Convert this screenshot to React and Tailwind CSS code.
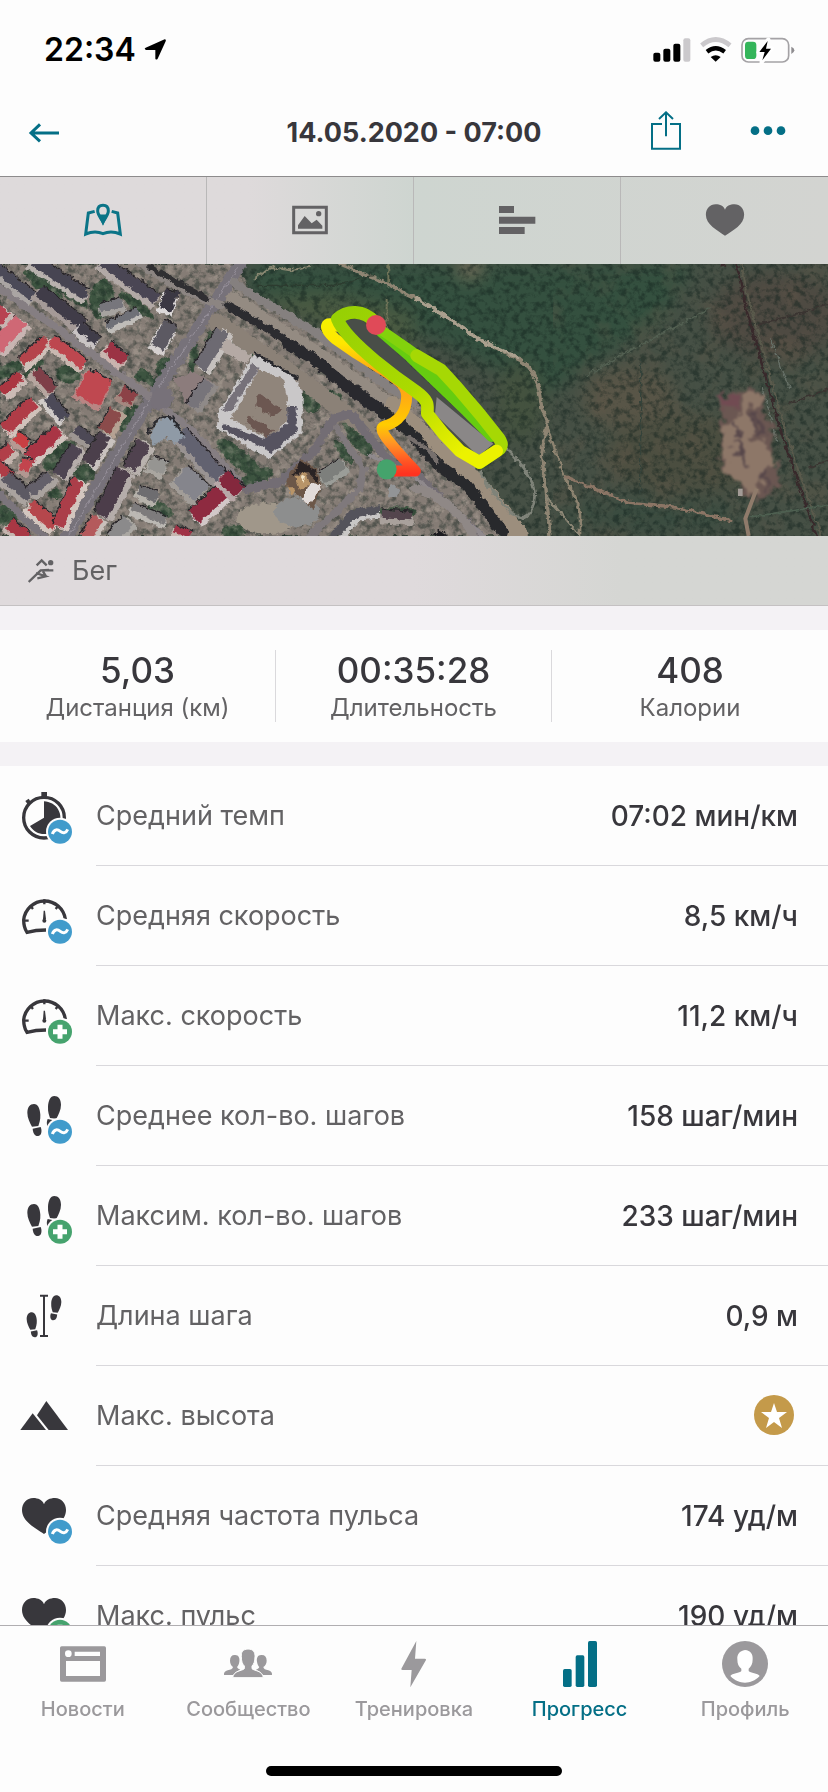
import React from 'react'

const stats = [
  { value: '5,03', label: 'Дистанция (км)' },
  { value: '00:35:28', label: 'Длительность' },
  { value: '408', label: 'Калории' },
]

const details = [
  { icon: 'pace', badge: 'avg', label: 'Средний темп', value: '07:02 мин/км' },
  { icon: 'gauge', badge: 'avg', label: 'Средняя скорость', value: '8,5 км/ч' },
  { icon: 'gauge', badge: 'max', label: 'Макс. скорость', value: '11,2 км/ч' },
  { icon: 'steps', badge: 'avg', label: 'Среднее кол-во. шагов', value: '158 шаг/мин' },
  { icon: 'steps', badge: 'max', label: 'Максим. кол-во. шагов', value: '233 шаг/мин' },
  { icon: 'stride', label: 'Длина шага', value: '0,9 м' },
  { icon: 'mountain', label: 'Макс. высота', premium: true },
  { icon: 'heart', badge: 'avg', label: 'Средняя частота пульса', value: '174 уд/м' },
  { icon: 'heart', badge: 'max', label: 'Макс. пульс', value: '190 уд/м' },
]

// x, y, width, height, angle, roof, wall
const buildings = [
  [40, 85, 150, 30, 38, '#4b4a58', '#aaa5a3'],
  [175, 70, 190, 34, 33, '#474552', '#b9b2ae'],
  [180, 162, 170, 36, 37, '#403c48', '#a59a97'],
  [262, 240, 70, 30, 38, '#403d49', '#c9c4c4'],
  [385, 80, 200, 34, 35, '#4a4654', '#b2a9a6'],
  [505, 140, 40, 60, 20, '#3b3843', '#dcd8d8'],
  [490, 245, 44, 84, 28, '#5c5962', '#d5d0cf'],
  [335, 155, 70, 26, -15, '#77767c', '#a7a3a0'],
  [370, 195, 105, 22, -25, '#6f7077', '#c0bdb9'],
  [345, 300, 66, 38, 38, '#9b3344', '#c9b4ae'],
  [30, 240, 110, 46, -48, '#cf6875', '#c8b5b2'],
  [5, 180, 40, 44, -48, '#b84352', '#c8b5b2'],
  [105, 292, 100, 32, -42, '#b5444b', '#cfc0b8'],
  [200, 295, 125, 32, 38, '#bd474f', '#c9b8b0'],
  [38, 390, 72, 32, -42, '#ab3641', '#cbbbb5'],
  [128, 378, 80, 32, 48, '#7e3f48', '#b6a69f'],
  [278, 402, 80, 84, 28, '#bf4850', '#b98583'],
  [165, 460, 84, 30, 52, '#4c4a58', '#d0cbc8'],
  [62, 485, 120, 38, -43, '#b03c47', '#d1c2bb'],
  [62, 560, 44, 30, 35, '#c93f43', '#b69892'],
  [135, 570, 122, 40, -42, '#a93545', '#d1c4be'],
  [248, 545, 66, 28, 35, '#4d4956', '#9d9692'],
  [295, 585, 100, 38, -58, '#4b3f4b', '#c9c2bf'],
  [208, 620, 100, 38, -58, '#4e4552', '#b5adaa'],
  [380, 425, 46, 36, 30, '#8c4247', '#a4877f'],
  [335, 500, 70, 40, -62, '#8b4b4b', '#b5a293'],
  [15, 600, 60, 34, -40, '#b13f49', '#c5b5ae'],
  [75, 635, 30, 36, 20, '#c2444d', '#b29791'],
  [10, 655, 60, 32, 40, '#ae3c46', '#c2b3ad'],
  [50, 700, 100, 34, 40, '#5c5963', '#aaa39f'],
  [125, 690, 80, 32, -38, '#64606a', '#aaa39f'],
  [125, 785, 100, 36, 40, '#b5474c', '#d3c6bf'],
  [210, 745, 150, 36, -66, '#ab3e49', '#d3c6bf'],
  [50, 830, 70, 34, 38, '#a83744', '#c4b6af'],
  [280, 820, 70, 36, -60, '#b45a5c', '#c9c0bb'],
  [415, 605, 90, 42, -60, '#50424f', '#b9b2ae'],
  [343, 715, 150, 46, -64, '#4c3d4a', '#b5adaa'],
  [365, 825, 70, 40, -50, '#8b8a8b', '#aaa7a2'],
  [600, 605, 185, 44, 48, '#626270', '#999392'],
  [645, 735, 160, 48, -42, '#8e2a40', '#d2c8c8'],
  [690, 690, 70, 44, 44, '#84283d', '#b8a8a8'],
  [570, 690, 90, 66, 42, '#85858c', '#a29d98'],
  [445, 780, 110, 24, 22, '#7d7b7c', '#bbb8b3'],
  [440, 720, 60, 30, 25, '#6e6d70', '#b6b2ab'],
  [545, 835, 50, 24, 25, '#a03246', '#c5b5ae'],
  [470, 635, 50, 40, 25, '#969592', '#aaa6a0'],
  [640, 285, 130, 42, -58, '#6d6a72', '#c6c1be'],
  [605, 420, 90, 36, -55, '#77747a', '#8f8a88'],
  [1190, 785, 90, 26, 4, '#54454d', '#a9a19c'],
  [1000, 650, 80, 36, -35, '#7d7f7c', '#9b9d98'],
]

const trees = [
  [130, 90, 70, 20, 38], [215, 120, 60, 14, 35], [305, 130, 36, 60, 10], [410, 150, 60, 16, 38],
  [205, 355, 36, 30, 0], [428, 360, 24, 20, 0], [490, 335, 20, 34, 25], [458, 378, 18, 14, 0],
  [20, 345, 50, 20, -20], [390, 490, 30, 46, 35], [180, 600, 60, 34, -40], [252, 655, 34, 28, 0],
  [720, 610, 90, 26, 40], [770, 665, 50, 22, -20], [935, 435, 30, 36, 0], [1000, 425, 30, 18, 20],
  [1075, 550, 24, 66, -36], [1030, 590, 14, 44, -35], [700, 830, 36, 22, 0], [480, 765, 40, 22, 20],
  [600, 740, 24, 30, 20], [20, 780, 36, 30, 0], [715, 265, 60, 18, 38], [580, 310, 12, 44, 10],
  [165, 715, 20, 16, 0], [640, 240, 26, 18, -40], [100, 340, 40, 12, -40], [1190, 770, 60, 14, 0],
]

const FOOT = 'M102 102C114 102 120 116 121 134C122 150 117 160 115 168L96 170C90 158 82 144 82 128C82 112 90 102 102 102Z'
const HEEL = 'M98 176L122 171C126 180 126 196 115 198C103 199 99 188 98 176Z'
const HEART = 'M132 103C128 90 114 84 100 84C80 84 66 99 66 120C66 154 106 174 132 192C160 174 198 154 198 120C198 99 184 84 165 84C150 84 136 90 132 103Z'

const Satellite = () => (
  <svg className="block w-full h-[272px]" viewBox="0 26 2484 816" preserveAspectRatio="xMidYMid slice" role="img" aria-label="Карта маршрута">
    <defs>
      <filter id="grain" x="0" y="0" width="100%" height="100%" colorInterpolationFilters="sRGB">
        <feTurbulence type="fractalNoise" baseFrequency="0.05" numOctaves="4" seed="7" />
        <feColorMatrix values="0 0 0 0 0.08  0 0 0 0 0.14  0 0 0 0 0.12  3.4 0 0 0 -1.5" />
      </filter>
      <filter id="earth" x="0" y="0" width="100%" height="100%" colorInterpolationFilters="sRGB">
        <feTurbulence type="fractalNoise" baseFrequency="0.009" numOctaves="5" seed="12" />
        <feColorMatrix values="0 0 0 0 0.42  0 0 0 0 0.36  0 0 0 0 0.3  0 4 0 0 -1.9" />
      </filter>
      <filter id="town" x="0" y="0" width="100%" height="100%" colorInterpolationFilters="sRGB">
        <feTurbulence type="fractalNoise" baseFrequency="0.04" numOctaves="4" seed="21" />
        <feColorMatrix values="0 0 0 0 0.8  0 0 0 0 0.75  0 0 0 0 0.7  0 3.4 0 0 -1.6" />
      </filter>
      <filter id="rough" x="0" y="0" width="100%" height="100%" colorInterpolationFilters="sRGB">
        <feTurbulence type="fractalNoise" baseFrequency="0.06" numOctaves="3" seed="3" result="noise" />
        <feDisplacementMap in="SourceGraphic" in2="noise" scale="18" xChannelSelector="R" yChannelSelector="G" />
      </filter>
      <filter id="crumble" x="-10%" y="-10%" width="120%" height="120%" colorInterpolationFilters="sRGB">
        <feTurbulence type="fractalNoise" baseFrequency="0.03" numOctaves="4" seed="9" result="noise" />
        <feDisplacementMap in="SourceGraphic" in2="noise" scale="70" xChannelSelector="R" yChannelSelector="G" />
        <feGaussianBlur stdDeviation="3" />
      </filter>
      <filter id="soft" x="-20%" y="-20%" width="140%" height="140%" colorInterpolationFilters="sRGB">
        <feGaussianBlur stdDeviation="26" />
      </filter>
      <linearGradient id="warm" gradientUnits="userSpaceOnUse" x1="0" y1="90" x2="0" y2="550">
        <stop offset="0" stopColor="#f6f200" />
        <stop offset="0.15" stopColor="#ffe600" />
        <stop offset="0.36" stopColor="#ff9d18" />
        <stop offset="0.5" stopColor="#ffac12" />
        <stop offset="0.68" stopColor="#ffcc00" />
        <stop offset="0.8" stopColor="#ff9524" />
        <stop offset="0.92" stopColor="#ff5524" />
        <stop offset="1" stopColor="#ff3320" />
      </linearGradient>
      <linearGradient id="lime" gradientUnits="userSpaceOnUse" x1="90" y1="70" x2="450" y2="500">
        <stop offset="0" stopColor="#97d004" />
        <stop offset="0.55" stopColor="#abda00" />
        <stop offset="0.8" stopColor="#d2e600" />
        <stop offset="1" stopColor="#ecf200" />
      </linearGradient>
      <clipPath id="townClip">
        <path d="M0 26H700L760 120L1240 430L1580 842H0Z" />
      </clipPath>
    </defs>

    {/* Ground */}
    <rect y="26" width="2484" height="816" fill="#465045" />
    <g filter="url(#soft)">
      <path d="M760 26H2080L1980 200L1760 330L1640 420L1300 250L740 110Z" fill="#34503f" />
      <ellipse cx="1890" cy="430" rx="140" ry="100" fill="#585547" />
      <ellipse cx="2330" cy="180" rx="200" ry="130" fill="#4e4a42" />
      <ellipse cx="2060" cy="600" rx="240" ry="120" fill="#4b4e40" />
      <ellipse cx="1560" cy="440" rx="70" ry="120" fill="#44523f" />
      <ellipse cx="1410" cy="45" rx="40" ry="20" fill="#887862" />
      <ellipse cx="1950" cy="780" rx="260" ry="50" fill="#3a4c40" />
      <path d="M760 130L1000 110L1240 170V300L1000 220Z" fill="#4a5a42" />
    </g>
    <rect x="1660" y="26" width="824" height="816" filter="url(#earth)" opacity="0.25" />
    <rect y="26" width="2484" height="816" filter="url(#grain)" opacity="0.5" />

    {/* Town */}
    <g filter="url(#rough)">
      <path d="M0 26H710L760 120L960 240L1230 420L1400 600L1570 842H0Z" fill="#857c75" />
      {trees.map(([x, y, rx, ry, a], i) => (
        <ellipse key={i} cx={x} cy={y} rx={rx} ry={ry} transform={`rotate(${a} ${x} ${y})`} fill="#3d5440" />
      ))}
    </g>
    <g clipPath="url(#townClip)">
      <rect y="26" width="1600" height="816" filter="url(#town)" opacity="0.3" />
      <rect y="26" width="1600" height="816" filter="url(#grain)" opacity="0.45" />
    </g>

    <g filter="url(#rough)">
      {/* Roads */}
      <g fill="none" strokeLinecap="round" strokeLinejoin="round">
        <path d="M720 26L600 210L440 450L200 842" stroke="#77727a" strokeWidth="38" />
        <path d="M712 40L590 222L434 460L205 842" stroke="#96909a" strokeWidth="3" />
        <path d="M0 100L160 210L430 410L560 510L720 680" stroke="#857e82" strokeWidth="22" />
        <path d="M0 720L130 842" stroke="#7b757c" strokeWidth="22" />
        <path d="M420 26L560 110L660 150" stroke="#8c8582" strokeWidth="22" />
        <path d="M650 200L800 300L980 430L1100 520" stroke="#8b8177" strokeWidth="50" />
        <path d="M700 130L960 300L1160 440" stroke="#948b82" strokeWidth="40" />
        <path d="M700 80L760 120L960 240L1130 370L1240 440" stroke="#85807f" strokeWidth="26" />
        <path d="M740 700L840 680L940 590L1000 490L1050 475L1120 560L1170 620L1250 660L1440 842" stroke="#736d74" strokeWidth="26" />
        <path d="M1010 520L1090 640L1080 700L930 842" stroke="#7f797c" strokeWidth="22" />
        <path d="M1110 600L1240 660L1450 842" stroke="#8f898c" strokeWidth="12" />
        <path d="M450 36L620 130" stroke="#302f32" strokeWidth="16" />
        <path d="M1180 450L1310 580L1400 650L1480 740L1560 842" stroke="#9c8e7d" strokeWidth="54" />
        <path d="M680 150L820 230L960 330L1080 410L1170 480" stroke="#2c2c30" strokeWidth="24" />
        <path d="M860 265L940 310L1060 410L1150 470" stroke="#29292e" strokeWidth="34" />
        <path d="M1150 470L1220 520L1310 625L1400 690L1510 830" stroke="#28292c" strokeWidth="34" />
        <path d="M1225 545L1295 590L1310 620" stroke="#77706d" strokeWidth="12" />
        <path d="M1242 700C1300 700 1400 790 1420 842" stroke="#8f8886" strokeWidth="26" />
      </g>
      <circle cx="485" cy="430" r="34" fill="#777179" />
      <ellipse cx="800" cy="790" rx="90" ry="46" fill="#a0978a" />
      <path d="M520 370L580 350L640 380L570 460Z" fill="#8c7c7c" />

      {/* Buildings */}
      {buildings.map(([x, y, w, h, a, roof, wall], i) => (
        <g key={i} transform={`translate(${x} ${y}) rotate(${a})`}>
          <rect x={-w / 2 - 4} y={-h / 2 + 9} width={w + 8} height={h} fill={wall} />
          <rect x={-w / 2} y={-h / 2 - 6} width={w} height={h} fill={roof} />
          <path d={`M${-w / 2} ${-h / 2 - 8}H${w / 2}`} stroke="#272429" strokeWidth="4" />
        </g>
      ))}
      <path d="M450 545C458 510 480 485 510 488C535 500 550 525 552 545L525 570L495 545L462 568Z" fill="#8f9aa6" />
      <path d="M446 535C458 495 485 480 515 486L552 540" fill="none" stroke="#2b2b30" strokeWidth="7" />
      <path d="M680 250L755 300L735 330L660 280Z" fill="#b4a9a4" />

      {/* Courtyard block */}
      <path d="M762 296L885 365L908 410V530L808 610L650 520L655 470Z" fill="#c9c7c8" />
      <path d="M760 292L895 370" stroke="#28282d" strokeWidth="8" />
      <path d="M776 340L850 372L866 455L860 500L800 550L695 490Z" fill="#90857b" />
      <path d="M755 325L780 335L690 470L665 465Z" fill="#77727a" />
      <path d="M668 505L790 550L862 505V455H890V530L815 590L665 520Z" fill="#565360" />
      <path d="M780 415L845 465L820 485L765 450ZM745 480L820 525L800 545L740 505Z" fill="#6c5751" />

      {/* Church */}
      <ellipse cx="890" cy="770" rx="68" ry="44" fill="#8d8e8e" />
      <path d="M872 650L905 610L950 640L965 690L940 760L900 730L858 690Z" fill="#6c5748" />
      <path d="M930 685L965 690L930 745L902 735Z" fill="#e2dcda" />
      <path d="M900 615L948 645L955 685L920 650L880 660Z" fill="#2a2324" />
      <path d="M885 665L915 650L930 690L900 705ZM862 690L885 700L875 720Z" fill="#b89468" />
      <path d="M900 660L915 665L910 680Z" fill="#f1e2c4" />

      <path d="M1000 842L1060 770L1140 752V790L1080 795L1040 842Z" fill="#c9c7c6" />
      <path d="M985 842L1050 765L1140 750V772L1070 785L1020 842Z" fill="#54535b" />
      <circle cx="1180" cy="708" r="17" fill="#929496" />
      <path d="M1290 842L1320 826L1350 842Z" fill="#1c1c20" />

      {/* Country tracks */}
      <g fill="none" strokeLinecap="round" strokeLinejoin="round">
        <path d="M1020 26L1150 80L1250 130L1370 205L1440 255L1550 310Q1600 330 1616 400L1626 460L1642 500L1624 600L1638 700L1650 842" stroke="#8f8573" strokeWidth="10" />
        <path d="M1250 130L1370 205L1440 255L1550 305" stroke="#aaa08e" strokeWidth="10" />
        <path d="M1642 520L1690 650L1740 760L1740 842" stroke="#8d8370" strokeWidth="8" />
        <path d="M1700 665L1880 740L2020 755L2190 795" stroke="#8b7565" strokeWidth="10" />
        <path d="M1640 725L1740 840" stroke="#8d8776" strokeWidth="7" />
        <path d="M1520 580Q1604 660 1604 720Q1600 790 1560 785T1440 650" stroke="#7f8379" strokeWidth="8" />
        <path d="M760 75L810 35L870 45L930 35" stroke="#898771" strokeWidth="6" />
        <path d="M1165 26V80M1160 130V220" stroke="#6f7358" strokeWidth="6" />
        <path d="M770 90H1000L1120 60" stroke="#2c3b2f" strokeWidth="4" />
        <path d="M1760 360L1900 280L2130 160" stroke="#536052" strokeWidth="4" />
        <path d="M1922 310V720" stroke="#34423a" strokeWidth="4" />
        <path d="M2165 26L2175 34M2210 26L2238 160L2290 340L2340 520L2400 700L2450 842" stroke="#38292b" strokeWidth="7" />
        <path d="M2224 26L2252 160L2304 340L2354 520L2414 700L2464 842" stroke="#5a5a4c" strokeWidth="6" />
        <path d="M2310 250L2370 400M2290 400L2330 560" stroke="#667067" strokeWidth="4" />
        <path d="M2280 205L2400 175L2484 145M2370 445L2484 400M2430 635L2484 615" stroke="#3a3431" strokeWidth="5" />
        <path d="M2250 785L2484 750" stroke="#4e6051" strokeWidth="5" />
      </g>
    </g>

    {/* Quarry */}
    <g filter="url(#crumble)">
      <path d="M2140 415L2190 420L2285 398L2295 480L2330 530L2325 570L2300 600L2345 640L2330 700L2270 735L2225 700L2170 640L2160 560L2165 500Z" fill="#6b5752" />
      <path d="M2140 415L2210 425L2200 455L2170 470Z" fill="#714b52" />
      <path d="M2225 425L2285 400V450L2240 470L2262 540L2300 570L2330 620L2290 640L2270 720L2190 670L2165 590L2170 520L2215 480Z" fill="#8d7768" />
      <path d="M2200 500L2220 540M2250 470L2260 530M2195 600L2230 590M2270 480L2290 540M2290 640L2300 700M2210 560L2240 640" stroke="#57474a" strokeWidth="14" />
    </g>
    <path d="M2270 700L2236 790L2246 842" fill="none" stroke="#8f7b6b" strokeWidth="12" />
    <rect x="2214" y="700" width="14" height="22" fill="#a39b96" />

    {/* Route */}
    <g transform="translate(930 105)">
      <path d="M100 90L150 85L550 460L500 500L340 350Z" fill="#494e48" />
      <path d="M380 320L550 460L505 498L375 372Z" fill="#8a8787" />
      <path d="M60 110L220 225L160 215Z" fill="#4c4b4b" />
      <g fill="none" strokeLinecap="round" strokeLinejoin="round">
        <path d="M245 542H316L268 490C225 440 205 415 222 408C270 395 290 360 290 318C290 285 265 270 225 243L140 190L75 145C35 110 45 88 84 108" stroke="url(#warm)" strokeWidth="33" />
        <path d="M90 110L130 165L190 215" stroke="#d8e600" strokeWidth="20" />
        <path d="M212 122L300 198L385 280L470 362L545 438" stroke="#66cc10" strokeWidth="34" />
        <path d="M400 430L450 482L500 507" stroke="#6ccc10" strokeWidth="32" />
        <path d="M215 120L290 172L350 215" stroke="#83d20c" strokeWidth="30" />
        <path d="M320 196L392 238L440 290L510 372L560 435Q582 460 570 475L508 517" stroke="#a6d804" strokeWidth="38" />
        <path d="M198 98C160 55 110 60 82 86C95 120 140 165 200 215L260 262L320 305C360 335 352 345 352 370L400 430L450 482L508 516L560 482" stroke="url(#lime)" strokeWidth="38" />
      </g>
      <circle cx="198" cy="104" r="30" fill="#e04a58" />
      <circle cx="230" cy="537" r="30" fill="#45a36c" />
    </g>
  </svg>
)

const Glyph = ({ name }) => {
  switch (name) {
    case 'pace':
      return (
        <g>
          <circle cx="132" cy="143" r="61" fill="none" stroke="currentColor" strokeWidth="10" />
          <rect x="124" y="66" width="17" height="14" />
          <path d="M76 93L86 86L93 97L84 104Z" />
          <path d="M132 143V94A49 49 0 1 1 90 168Z" />
        </g>
      )
    case 'gauge':
      return (
        <g>
          <path d="M196 148A63 64 0 0 0 71 150Q71 172 81 187Q107 180 138 180" fill="none" stroke="currentColor" strokeWidth="10" />
          <path d="M133 88V103M91 107L99 117M175 107L167 117M74 152H86" stroke="currentColor" strokeWidth="7" />
          <path d="M131 122H135L138 148H129Z" />
          <circle cx="133" cy="152" r="6" />
        </g>
      )
    case 'steps':
      return (
        <g>
          <path d={FOOT} />
          <path d={HEEL} />
          <g transform="translate(265 -24) scale(-1 1)">
            <path d={FOOT} />
            <path d={HEEL} />
          </g>
        </g>
      )
    case 'stride':
      return (
        <g>
          <path d="M120 77H144M132 77V198M120 198H144" fill="none" stroke="currentColor" strokeWidth="6" />
          <g transform="translate(16 47) scale(.78)">
            <path d={FOOT} />
            <path d={HEEL} />
          </g>
          <g transform="translate(248 -4) scale(-.78 .78)">
            <path d={FOOT} />
            <path d={HEEL} />
          </g>
        </g>
      )
    case 'mountain':
      return (
        <g>
          <path d="M61 180L98 130L138 180Z" />
          <path d="M111 136L139 93L204 180H146Z" />
        </g>
      )
    default:
      return <path d={HEART} />
  }
}

const DetailIcon = ({ name, badge }) => (
  <svg className="w-[58px] h-[58px] shrink-0 text-[#38373c]" viewBox="54 51 174 174" fill="currentColor" aria-hidden="true">
    <Glyph name={name} />
    {badge && <circle cx="180" cy="185" r="42" fill="#fdfdfd" />}
    {badge === 'avg' && (
      <g>
        <circle cx="180" cy="185" r="36" fill="#419bcb" />
        <path d="M157 192C163 176 173 178 181 184C190 191 198 189 203 178" fill="none" stroke="#fff" strokeWidth="9" />
      </g>
    )}
    {badge === 'max' && (
      <g>
        <circle cx="180" cy="185" r="36" fill="#46a36e" />
        <path d="M180 164V206M159 185H201" stroke="#fff" strokeWidth="15" />
      </g>
    )}
  </svg>
)

const StarBadge = () => (
  <svg className="w-12 h-12" viewBox="0 0 48 48" role="img" aria-label="Премиум">
    <circle cx="24" cy="23" r="20" fill="#c49a4a" />
    <path d="M24 11L27 20H37L29 26L32 36L24 30L16 36L19 26L11 20H21Z" fill="#fff" />
  </svg>
)

const viewTabs = [
  {
    label: 'Карта',
    active: true,
    icon: (
      <svg className="w-10 h-10" viewBox="252 598 120 120" fill="none" stroke="currentColor" strokeWidth="9">
        <path d="M287 632L268 637L260 700Q288 688 312 699Q336 688 364 700L356 637L338 632" />
        <path d="M312 614C325 614 328 624 328 631C328 642 318 653 312 664C306 653 296 642 296 631C296 624 299 614 312 614Z" />
        <path d="M304 646H320L312 664Z" fill="currentColor" />
      </svg>
    ),
  },
  {
    label: 'Фото',
    icon: (
      <svg className="w-10 h-10" viewBox="873 600 120 120" fill="currentColor">
        <path d="M884 622H982V698H884Z" fill="none" stroke="currentColor" strokeWidth="9" />
        <circle cx="959" cy="641" r="8" />
        <path d="M897 686V676L917 648L938 670L953 659L970 677V686Z" />
      </svg>
    ),
  },
  {
    label: 'Круги',
    icon: (
      <svg className="w-10 h-10" viewBox="253 600 120 120" fill="currentColor">
        <path d="M259 618H304V639H259ZM259 650H368V671H259ZM259 681H336V702H259Z" />
      </svg>
    ),
  },
  {
    label: 'Пульс',
    icon: (
      <svg className="w-10 h-10" viewBox="63 79 138 118" fill="currentColor">
        <path d={HEART} />
      </svg>
    ),
  },
]

const navItems = [
  {
    label: 'Новости',
    icon: (
      <svg className="w-[50px] h-[50px]" viewBox="171 90 150 150" fill="currentColor" aria-hidden="true">
        <path fillRule="evenodd" d="M182 112H310Q315 112 315 117V213Q315 218 310 218H182Q177 218 177 213V117Q177 112 182 112ZM195 156V201H297V156ZM221 128V141H297V128Z" />
        <circle cx="202" cy="134" r="10" fill="#fff" />
      </svg>
    ),
  },
  {
    label: 'Сообщество',
    icon: (
      <svg className="w-[50px] h-[50px]" viewBox="672 87 150 150" fill="currentColor" aria-hidden="true">
        <path d="M707 135C718 134 723 143 721 155C720 163 717 168 714 171C716 176 720 178 724 179C712 184 706 189 703 195H675C674 187 678 184 686 181C695 179 701 177 702 171C697 167 693 160 693 152C693 141 698 135 707 135Z" />
        <path d="M788 135C777 134 772 143 774 155C775 163 778 168 781 171C779 176 775 178 771 179C783 184 789 189 792 195H819C820 187 816 184 808 181C799 179 794 177 793 171C799 167 803 160 803 152C803 141 798 135 788 135Z" />
        <path d="M747 117C763 117 769 128 768 140C768 155 764 163 759 168V176C765 183 790 181 793 203H701C704 181 730 183 736 176V168C730 162 727 154 727 140C726 126 731 118 747 117Z" stroke="#fff" strokeWidth="3" />
      </svg>
    ),
  },
  {
    label: 'Тренировка',
    icon: (
      <svg className="w-[50px] h-[50px]" viewBox="1165 87 150 150" fill="currentColor" aria-hidden="true">
        <path d="M1247 93L1202 176Q1201 180 1206 180H1233L1229 232L1276 150Q1277 146 1272 146H1243Z" />
      </svg>
    ),
  },
  {
    label: 'Прогресс',
    active: true,
    icon: (
      <svg className="w-[50px] h-[50px]" viewBox="420 87 150 150" fill="currentColor" aria-hidden="true">
        <rect x="444" y="177" width="26" height="54" rx="5" />
        <rect x="482" y="136" width="26" height="95" rx="5" />
        <rect x="519" y="93" width="27" height="138" rx="5" />
      </svg>
    ),
  },
  {
    label: 'Профиль',
    icon: (
      <svg className="w-[50px] h-[50px]" viewBox="915 87 150 150" fill="currentColor" aria-hidden="true">
        <circle cx="990" cy="162" r="69" />
        <path d="M990 120C1007 121 1014 133 1013 148C1013 162 1008 170 1001 176V183C1006 190 1029 189 1034 198C1020 212 1006 218 990 218C974 218 960 212 946 198C951 189 975 190 979 183V176C971 170 967 162 967 148C966 133 973 123 990 120Z" fill="#fff" />
      </svg>
    ),
  },
]

const StatusBar = () => (
  <div className="flex items-center justify-between h-[90px] pt-2.5 pl-11 pr-[30px] shrink-0">
    <div className="flex items-center gap-2 text-black">
      <span className="text-[32px] leading-10 font-semibold">22:34</span>
      <svg className="w-[22px] h-[22px]" viewBox="422 118 66 66" aria-hidden="true">
        <path d="M484 119Q489 119 487 125L463 177Q459 182 456 177V151H428Q421 148 427 144Z" />
      </svg>
    </div>
    <svg className="w-[147px] h-7" viewBox="710 106 441 84" role="img" aria-label="Сеть и заряд">
      <rect x="717" y="156" width="21" height="27" rx="6" />
      <rect x="747" y="144" width="21" height="39" rx="6" />
      <rect x="777" y="129" width="21" height="54" rx="6" />
      <rect x="807" y="113" width="21" height="70" rx="6" fill="#cbc9cc" />
      <path d="M862 134Q904 99 947 134" fill="none" stroke="#cbc9cc" strokeWidth="14" />
      <path d="M878 153Q904 133 931 153" fill="none" stroke="#000" strokeWidth="13" />
      <path d="M889 169Q904 159 919 169L904 183Z" />
      <rect x="983" y="114" width="140" height="70" rx="19" fill="none" stroke="#a4a2a5" strokeWidth="5" />
      <path d="M1131 138Q1140 142 1140 149Q1140 156 1131 160Z" fill="#8f8d90" />
      <rect x="992" y="123" width="34" height="52" rx="10" fill="#34b55a" />
      <path d="M1062 117L1033 155H1050L1042 184L1072 143H1056Z" stroke="#fff" strokeWidth="13" strokeLinejoin="round" />
      <path d="M1060 121L1035 154H1051L1044 179L1070 144H1055Z" />
    </svg>
  </div>
)

const App = () => {
  return (
    <div className="flex flex-col h-screen overflow-hidden bg-[#fdfdfd] font-['Inter','Liberation_Sans',sans-serif] text-[#38373c]">
      <StatusBar />

      <header className="grid grid-cols-[1fr_auto_1fr] items-center h-[86px] px-7 shrink-0">
        <button type="button" aria-label="Назад" className="justify-self-start text-[#046f86]">
          <svg className="w-8 h-8" viewBox="85 350 96 96" fill="none" stroke="currentColor" strokeWidth="9">
            <path d="M178 398H94M121 372L94 398L121 423" />
          </svg>
        </button>
        <h1 className="text-[27px] leading-9 font-bold">14.05.2020 - 07:00</h1>
        <div className="flex items-center justify-end gap-[62px] pr-3 pb-1 text-[#046f86]">
          <button type="button" aria-label="Поделиться">
            <svg className="w-10 h-10" viewBox="693 334 120 120" fill="none" stroke="currentColor" strokeWidth="6">
              <path d="M741 373H711V447H795V373H765M753 410V340M732 358L753 338L774 358" />
            </svg>
          </button>
          <button type="button" aria-label="Ещё">
            <svg className="w-10 h-10" viewBox="999 334 120 120" fill="currentColor">
              <circle cx="1020" cy="393" r="13" />
              <circle cx="1059" cy="393" r="13" />
              <circle cx="1098" cy="393" r="13" />
            </svg>
          </button>
        </div>
      </header>

      <div className="grid grid-cols-4 h-[88px] shrink-0 border-t border-[#8d8b8c] divide-x divide-[#b9b8b8] bg-linear-to-r from-[#dedadb] from-30% via-[#ced5d0] via-50% to-[#d3d4d1]">
        {viewTabs.map((tab) => (
          <button
            key={tab.label}
            type="button"
            aria-label={tab.label}
            className={`flex items-center justify-center pb-0.5 ${tab.active ? 'text-[#0b7487]' : 'text-[#636264]'}`}
          >
            {tab.icon}
          </button>
        ))}
      </div>

      <div className="shrink-0">
        <Satellite />
      </div>

      <div className="flex items-center gap-[18px] h-[70px] pl-7 shrink-0 border-b border-[#c4c1c2] bg-linear-to-r from-[#dfdadc] from-50% to-[#d5d6d3] to-75%">
        <svg className="w-[26px] h-[26px]" viewBox="83 916 78 78" fill="none" stroke="#636264" strokeWidth="7" aria-hidden="true">
          <path d="M109 938L124 923L139 938M85 988L121 953L146 952M132 953H159M107 961L136 971L111 977M128 956L137 971" />
          <circle cx="151" cy="930" r="8" fill="#636264" stroke="none" />
        </svg>
        <span className="text-[27px] leading-9 text-[#636264]">Бег</span>
      </div>

      {/* Summary */}
      <div className="py-6 shrink-0 bg-[#f4f2f5]">
        <div className="grid grid-cols-3 py-5 bg-[#fdfdfd] divide-x divide-[#dad9dc]">
          {stats.map((stat) => (
            <div key={stat.label} className="text-center">
              <p className="pb-1 text-[35px] leading-10 font-medium">{stat.value}</p>
              <p className="text-2xl leading-7 text-[#636264]">{stat.label}</p>
            </div>
          ))}
        </div>
      </div>

      {/* Workout details */}
      <dl className="flex-1 min-h-0 overflow-hidden">
        {details.map((item) => (
          <div key={item.label} className="flex items-center gap-5 h-[100px] pl-[18px]">
            <DetailIcon name={item.icon} badge={item.badge} />
            <div className="flex flex-1 items-center justify-between h-full pr-[30px] border-b border-[#d9d8dc]">
              <dt className="text-[27px] leading-9 text-[#636264]">{item.label}</dt>
              <dd className="text-[28px] leading-9 font-medium">{item.premium ? <StarBadge /> : item.value}</dd>
            </div>
          </div>
        ))}
      </dl>

      <nav className="shrink-0 border-t border-[#b0aeb1] bg-[#fdfdfd] pt-[13px] pb-4">
        <div className="grid grid-cols-5">
          {navItems.map((item) => (
            <a
              key={item.label}
              href="#"
              className={`flex flex-col items-center gap-1.5 ${item.active ? 'text-[#046f86]' : 'text-[#9b999c]'}`}
            >
              {item.icon}
              <span className="text-xl leading-7 font-medium">{item.label}</span>
            </a>
          ))}
        </div>
        <div className="w-[296px] h-2.5 mt-[43px] mx-auto rounded-full bg-black" />
      </nav>
    </div>
  )
}

export default App
